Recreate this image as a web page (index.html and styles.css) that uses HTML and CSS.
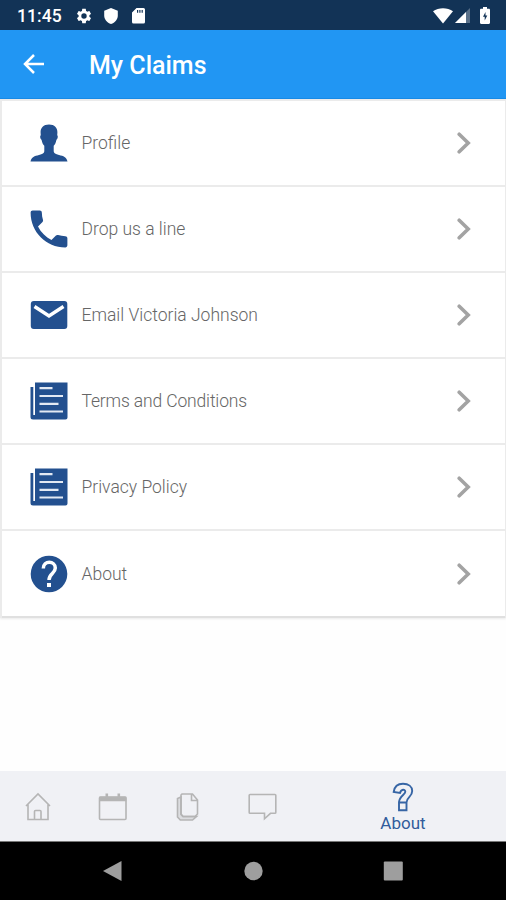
FILE: index.html
```html
<!DOCTYPE html>
<html lang="en">
<head>
    <meta charset="UTF-8">
    <meta name="viewport" content="width=device-width, initial-scale=1.0">
    <title>My Claims</title>
    <link rel="stylesheet" href="styles.css">
</head>
<body>
    <div class="status-bar">
        <span class="clock">11:45</span>
        <svg class="gear" width="18" height="18" viewBox="0 0 24 24"><path d="M19.14 12.94c.04-.3.06-.61.06-.94 0-.32-.02-.64-.07-.94l2.03-1.58c.18-.14.23-.41.12-.61l-1.92-3.32c-.12-.22-.37-.29-.59-.22l-2.39.96c-.5-.38-1.03-.7-1.62-.94l-.36-2.54c-.04-.24-.24-.41-.48-.41h-3.84c-.24 0-.43.17-.47.41l-.36 2.54c-.59.24-1.13.57-1.62.94l-2.39-.96c-.22-.08-.47 0-.59.22L2.74 8.87c-.12.21-.08.47.12.61l2.03 1.58c-.05.3-.09.63-.09.94s.02.64.07.94l-2.03 1.58c-.18.14-.23.41-.12.61l1.92 3.32c.12.22.37.29.59.22l2.39-.96c.5.38 1.03.7 1.62.94l.36 2.54c.05.24.24.41.48.41h3.84c.24 0 .44-.17.47-.41l.36-2.54c.59-.24 1.13-.56 1.62-.94l2.39.96c.22.08.47 0 .59-.22l1.92-3.32c.12-.22.07-.47-.12-.61l-2.01-1.58zM12 15.6a3.6 3.6 0 1 1 0-7.2 3.6 3.6 0 0 1 0 7.2z"/></svg>
        <svg class="shield" width="14" height="16" viewBox="0 0 14 16"><path d="M7 0l6.8 2.7v4.8c0 3.8-2.8 7.2-6.8 8.5C3 14.700.2 11.300.2 7.500V2.700z"/></svg>
        <svg class="sd-card" width="13" height="16" viewBox="0 0 13 16"><path fill-rule="evenodd" d="M4.500 0H11.500a1.500 1.500 0 0 1 1.500 1.500v12.500a1.500 1.500 0 0 1-1.500 1.500H1.500A1.500 1.500 0 0 1 0 14V4.500zM5 2v2.800h1.200V2zm2.300 0v2.800h1.200V2zm2.300 0v2.800h1.200V2z"/></svg>
        <div class="status-right">
            <svg width="20" height="16" viewBox="0 0 20 16"><path d="M0 3.200C5.500-.9 14.500-.9 20 3.200L10 15.500z"/></svg>
            <svg class="signal" width="15" height="15" viewBox="0 0 15 15"><path opacity=".3" d="M15 0v15H0z"/><path d="M11 4v11H0z"/></svg>
            <svg class="battery" width="10" height="17" viewBox="0 0 10 17"><path fill-rule="evenodd" d="M3 0h4v1.700h1.800c.7 0 1.200.5 1.200 1.200v12.900c0 .7-.5 1.200-1.200 1.200H1.200C.5 17 0 16.500 0 15.800V2.900c0-.7.5-1.200 1.200-1.200H3zM5.500 5L3 9.800h1.700v3.700l2.600-5H5.500z"/></svg>
        </div>
    </div>

    <header class="toolbar">
        <svg class="back" width="22" height="20" viewBox="0 0 22 20"><path d="M11 1L2 10l9 9M2 10h19"/></svg>
        <h1>My Claims</h1>
    </header>

    <main>
        <ul class="menu">
            <li>
                <svg class="icon" viewBox="0 0 38 38"><path d="M19 .5c5.500 0 8.600 3.300 8.400 8 0 1.200-.2 2-.2 2.800.9.300.8 3.300-.8 4.600-.5 2.700-1.400 4.400-2.700 5.900v5.500c0 2 1.800 2.800 5.300 3.600 4.500 1 7.500 2.100 8.500 6.600H.5c1-4.500 4-5.600 8.500-6.600 3.500-.8 5.300-1.600 5.300-3.600v-5.500c-1.300-1.500-2.200-3.200-2.700-5.900-1.600-1.300-1.700-4.300-.8-4.600 0-.8-.2-1.600-.2-2.800C10.400 3.800 13.500.5 19 .5z"/></svg>
                <span>Profile</span>
                <svg class="chevron" width="14" height="22" viewBox="0 0 14 22"><path d="M2.200 2.200l9 8.800-9 8.800"/></svg>
            </li>
            <li>
                <svg class="icon" viewBox="2.700 2.700 18.600 18.600"><path d="M6.620 10.790c1.440 2.830 3.760 5.140 6.590 6.590l2.200-2.200c.27-.27.67-.36 1.020-.24 1.120.37 2.330.57 3.570.57.550 0 1 .45 1 1V20c0 .55-.45 1-1 1-9.390 0-17-7.610-17-17 0-.55.45-1 1-1h3.500c.55 0 1 .45 1 1 0 1.250.2 2.450.57 3.570.11.350.03.740-.25 1.020l-2.200 2.200z"/></svg>
                <span>Drop us a line</span>
                <svg class="chevron" width="14" height="22" viewBox="0 0 14 22"><path d="M2.200 2.200l9 8.800-9 8.800"/></svg>
            </li>
            <li>
                <svg class="icon" viewBox="0 0 38 38"><rect x=".8" y="5" width="36.500" height="28" rx="3"/><path class="cut" d="M4.500 10.500L19 20l14.500-9.500"/></svg>
                <span>Email Victoria Johnson</span>
                <svg class="chevron" width="14" height="22" viewBox="0 0 14 22"><path d="M2.200 2.200l9 8.800-9 8.800"/></svg>
            </li>
            <li>
                <svg class="icon" viewBox="0 0 38 38"><path d="M5 .500h32.500v35a2 2 0 0 1-2 2H3a2.500 2.500 0 0 1-2.500-2.500V5h2.800v28H5z"/><path class="lines" d="M9.500 6.200h13M9.500 14h23.500M9.500 21.800h19M9.500 29.500h23.500"/></svg>
                <span class="snug">Terms and Conditions</span>
                <svg class="chevron" width="14" height="22" viewBox="0 0 14 22"><path d="M2.200 2.200l9 8.800-9 8.800"/></svg>
            </li>
            <li>
                <svg class="icon" viewBox="0 0 38 38"><path d="M5 .500h32.500v35a2 2 0 0 1-2 2H3a2.500 2.500 0 0 1-2.500-2.500V5h2.800v28H5z"/><path class="lines" d="M9.500 6.200h13M9.500 14h23.500M9.500 21.800h19M9.500 29.500h23.500"/></svg>
                <span>Privacy Policy</span>
                <svg class="chevron" width="14" height="22" viewBox="0 0 14 22"><path d="M2.200 2.200l9 8.800-9 8.800"/></svg>
            </li>
            <li>
                <svg class="icon" viewBox="0 0 38 38"><circle cx="19" cy="19" r="18.300"/><path class="cut" d="M13.300 13.500c0-8.500 12-8 12-.5 0 5.500-6.300 5.500-6.300 12"/><rect class="dot" x="17" y="28" width="4" height="4"/></svg>
                <span>About</span>
                <svg class="chevron" width="14" height="22" viewBox="0 0 14 22"><path d="M2.200 2.200l9 8.800-9 8.800"/></svg>
            </li>
        </ul>
    </main>

    <nav class="tabs">
        <a class="tab"><svg width="30" height="30" viewBox="0 0 30 30"><path d="M3 14L15 2l12 12M5 12.500V27.500h20V12.500M11.500 27v-7.500q0-1 1-1h4.500q1 0 1 1V27"/></svg></a>
        <a class="tab"><svg width="30" height="30" viewBox="0 0 30 30"><rect x="1.500" y="5" width="26.500" height="22.500" rx="1"/><path class="band" d="M2 5.500h25.500v3H2z"/><path class="rings" d="M8.800 1.500v4M20.800 1.500v4"/></svg></a>
        <a class="tab"><svg width="30" height="30" viewBox="0 0 30 30"><path class="sheet" d="M8 5L4.500 6.500v18.500l2.800 3H19.500l4-3.500H10L8 22z"/><path d="M9 2h10.500l5 6v14l-2.500 2.500H10L8 22.500V3zM18.500 2v6.500h6"/></svg></a>
        <a class="tab"><svg width="30" height="30" viewBox="0 0 30 30"><path d="M2 2.500h25q.8 0 .8.800v17.200q0 .8-.8.800H22.500L16.500 26.800v-5.500H2q-.8 0-.8-.8V3.300q0-.8.8-.8z"/></svg></a>
        <a class="tab active">
            <svg width="22" height="30" viewBox="0 0 22 30"><path d="M1.700 10C2.500 4 6 1.800 11 1.800c5.500 0 9.200 2.700 9.200 7.200 0 6.200-5.700 6-5.700 11.500H7c0-6.500 6.300-7.800 6.300-10.700 0-3-4.300-2.800-5.300 1.200zM7 20.500h7.500v7.800H7z"/></svg>
            <span>About</span>
        </a>
    </nav>

    <div class="system-nav">
        <svg width="20" height="22" viewBox="0 0 20 22"><path d="M0 11L18.500 1v20z"/></svg>
        <svg width="20" height="22" viewBox="0 0 20 22"><circle cx="10.500" cy="11" r="9.200"/></svg>
        <svg width="20" height="22" viewBox="0 0 20 22"><rect x=".8" y="1.500" width="19" height="19" rx="1"/></svg>
    </div>
</body>
</html>
```
FILE: styles.css
```css
* {
    margin: 0;
    padding: 0;
    box-sizing: border-box;
}

body {
    display: flex;
    flex-direction: column;
    height: 100vh;
    background: #fefefe;
    font-family: Roboto, sans-serif;
    overflow: hidden;
}

.status-bar {
    display: flex;
    align-items: center;
    height: 30px;
    padding: 1px 16px 0 17px;
    background: #123356;
    color: #fff;
    fill: #fff;
}

.clock {
    width: 58px;
    font-size: 17.5px;
    font-weight: 500;
    letter-spacing: 0.1px;
}

.shield {
    margin-left: 11px;
}

.sd-card {
    margin-left: 14px;
}

.status-right {
    display: flex;
    align-items: center;
    margin-left: auto;
}

.signal {
    margin-left: 2px;
}

.battery {
    margin-left: 10px;
}

.toolbar {
    display: flex;
    align-items: center;
    height: 69px;
    padding: 2px 0 0 23px;
    background: #2196f3;
    border-bottom: 1px solid #188be7;
    color: #fff;
}

.back {
    margin-bottom: 2px;
    fill: none;
    stroke: #fff;
    stroke-width: 2.5;
}

.toolbar h1 {
    margin-left: 44px;
    font-size: 25px;
    font-weight: 500;
}

main {
    flex: 1;
}

.menu {
    list-style: none;
    border: 1px solid #ebebeb;
    border-width: 2px 1px 0 2px;
    box-shadow: 0 1px 2px rgba(0, 0, 0, 0.08);
}

.menu li {
    display: flex;
    align-items: center;
    height: 86.1px;
    padding: 0 34px 0 28px;
    border-bottom: 2px solid #ebebeb;
    background: #fff;
    color: #666;
    font-size: 17.5px;
    font-weight: 300;
}

.menu li:last-child {
    border-bottom: 2px solid #e0e0e0;
}

.menu .snug {
    letter-spacing: -0.15px;
}

.icon {
    width: 38px;
    height: 38px;
    margin-right: 13.5px;
    fill: #23508f;
}

.icon .cut {
    fill: none;
    stroke: #fff;
    stroke-width: 3.5;
}

.icon .lines {
    fill: none;
    stroke: #e3e9f3;
    stroke-width: 2.2;
}

.icon .dot {
    fill: #fff;
}

.chevron {
    margin-left: auto;
    fill: none;
    stroke: #a3a3a3;
    stroke-width: 3.6;
    stroke-linecap: round;
}

.tabs {
    display: flex;
    height: 71px;
    background: #f0f1f5;
    border-bottom: 1px solid #777;
}

.tab {
    display: flex;
    align-items: center;
    justify-content: center;
    width: 75px;
    padding-top: 1px;
    fill: none;
    stroke: #b5b5b5;
    stroke-width: 1.6;
}

.tab .band {
    fill: #b5b5b5;
}

.tab .rings {
    stroke-width: 2.6;
}

.tab .sheet {
    fill: #dcdde0;
}

.tab.active {
    flex: 1;
    flex-direction: column;
    gap: 1px;
    padding-top: 2px;
    stroke: #3665a5;
    stroke-width: 1.9;
    color: #315c9b;
    font-size: 17px;
}

.tab.active span {
    line-height: 20px;
}

.system-nav {
    display: flex;
    align-items: center;
    justify-content: center;
    gap: 120px;
    height: 58px;
    background: #000;
    fill: #9e9e9e;
}
```
